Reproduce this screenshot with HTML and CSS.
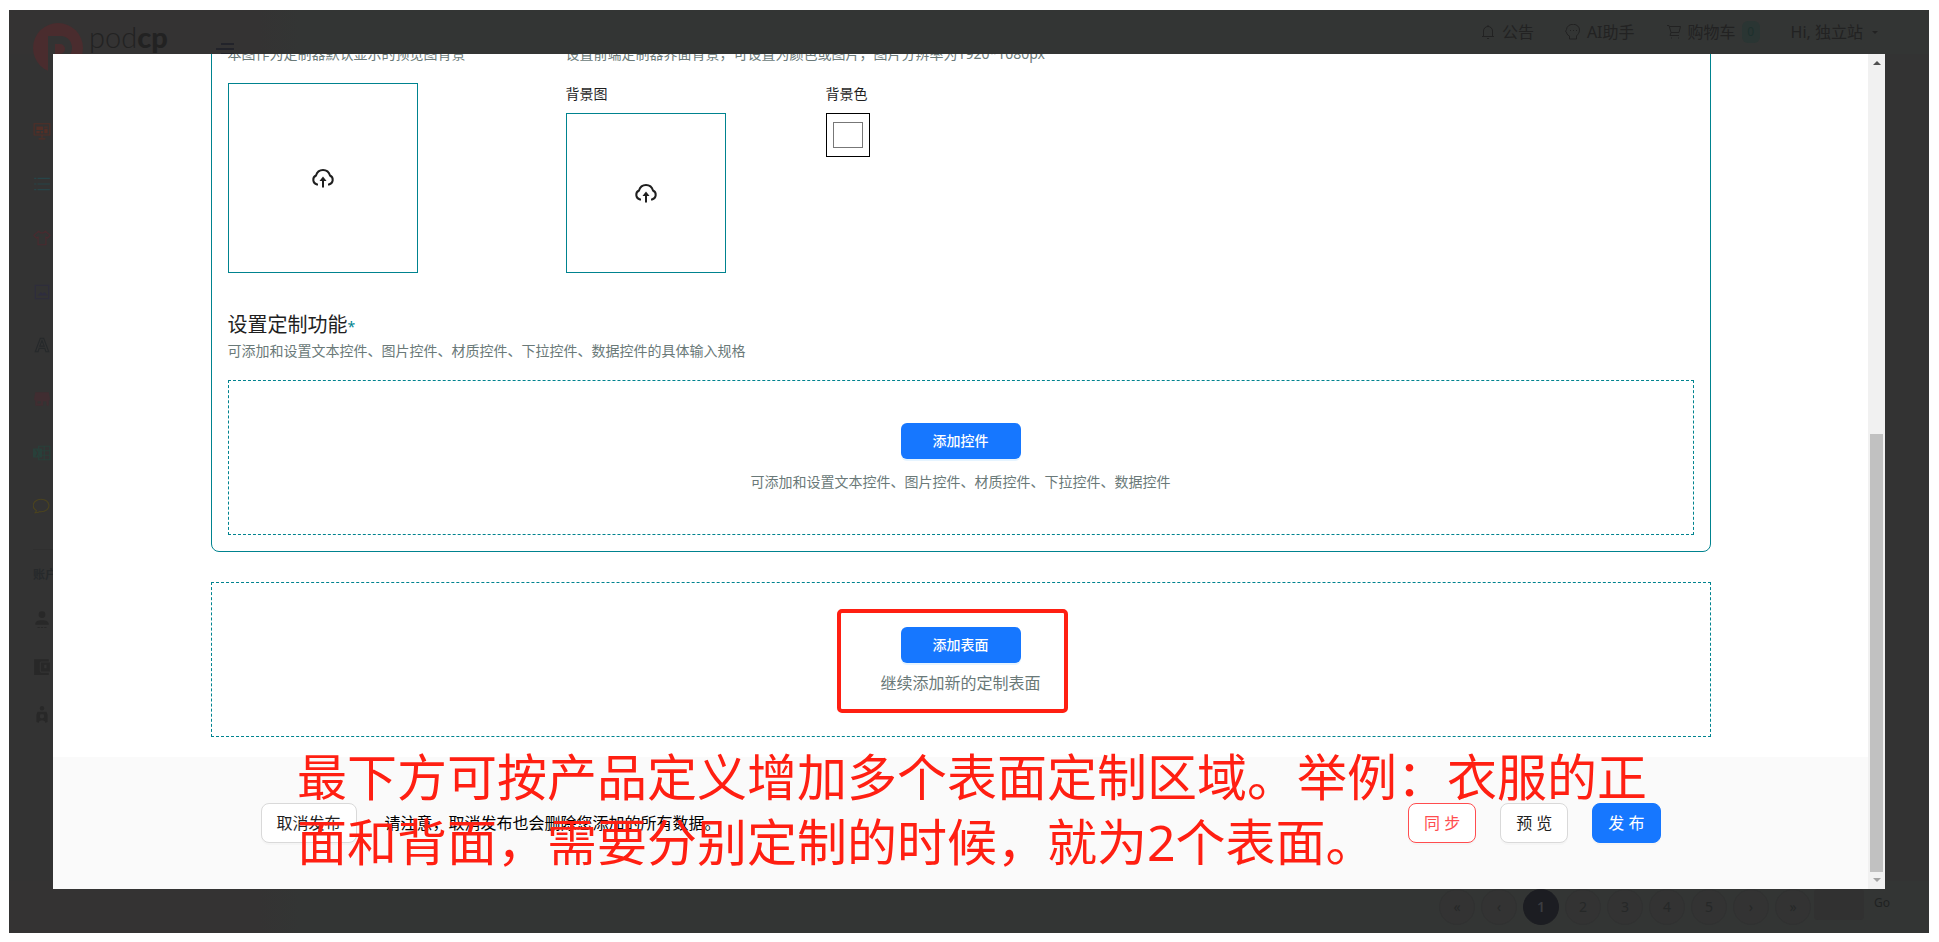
FILE: index.html
```
<!DOCTYPE html>
<html lang="zh-CN">
<head>
<meta charset="utf-8">
<title>podcp</title>
<link rel="stylesheet" href="styles.css">
</head>
<body>
<div class="app">
  <header class="topbar">
    <div class="brand">
      <svg class="brand-mark" viewBox="0 0 50 50" aria-hidden="true"><circle cx="25" cy="25" r="25" fill="#4a2c2e"/><path fill="#333" fill-rule="evenodd" d="M15 13h13a11 12 0 0 1 0 24h-5v13h-8zM22 21v10h5a5 5 0 0 0 0-10z"/></svg>
      <span class="brand-name">pod<b>cp</b></span>
      <svg class="menu" viewBox="0 0 18 12" aria-hidden="true"><path d="M5 1h13M0 6h18M5 11h13" stroke="#22232a" stroke-width="2"/></svg>
    </div>
    <nav class="top-links">
      <a href="#" class="top-link"><svg viewBox="0 0 16 16"><path d="M3.500 12V7a4.500 4.500 0 0 1 9 0v5M2 12.500h12M8 1v2M7 14.500h2" /></svg>公告</a>
      <a href="#" class="top-link"><svg viewBox="0 0 16 16"><path d="M4.500 15v-3C2 11 1.500 9 1.500 8l-1-.5 1-2A6.500 5.500 0 0 1 14.500 6c0 3-1.500 4-3 6v3zM5 6.500h1M8 6.500h1M11 6.500h1"/></svg>AI助手</a>
      <a href="#" class="top-link"><svg viewBox="0 0 16 16"><path d="M1 1.500h2l2 7h8l1.500-6H3.500M5 8.500l-1 3h9M5 14h1M12 14h1"/></svg>购物车<span class="count">0</span></a>
      <a href="#" class="top-link account">Hi, 独立站<i class="caret"></i></a>
    </nav>
  </header>

  <nav class="sidebar">
    <div class="side-main">
      <svg viewBox="0 0 16 16" style="color:#532f27"><path d="M1 1.500h14v10H1zM5 15h6M8 12v2"/><path class="solid" d="M3 4h6v3H3zM10 4h3v1h-3zM3 8h3v2H3zM7 8h2v2H7zM10 6h3v4h-3z"/></svg>
      <svg viewBox="0 0 16 16" style="color:#274549"><path d="M4 3h11M4 8h11M4 13h11M1 3h2M1 8h2M1 13h2"/></svg>
      <svg viewBox="0 0 16 16" style="color:#4a2a2f"><path d="M5 2 .8 5.500 3 8l1.500-.8V14h7V7.200L13 8l2.200-2.500L11 2Q8 5 5 2z"/></svg>
      <svg viewBox="0 0 16 16" style="color:#2e2d3e"><path d="M2 2h12v12H2z"/><path class="solid" d="M4 11l3-3 1.500 1.500L10 8l3 3z"/></svg>
      <svg viewBox="0 0 16 16" style="color:#26292b"><path d="M2 14 6.500 2h3L14 14h-2.500l-1-3h-5l-1 3zM6 9h4L8 4z"/></svg>
      <svg viewBox="0 0 16 16" style="color:#402d31"><path class="solid" fill-rule="evenodd" d="M2 2h12l1 5v2h-1v5h-2v-4H9v4H2V9H1V7zM4 10v2h3v-2z"/></svg>
      <svg viewBox="0 0 16 16" style="color:#28403a"><path d="M5 2h10v12H5zM10 2v12M5 6h10M5 10h10"/><path class="solid" fill-rule="evenodd" d="M0 4h8v8H0zM2 5l2 3-2 3h1l1-2 1 2h1L4.500 8 6 5H5L4 7 3 5z"/></svg>
      <svg viewBox="0 0 16 16" style="color:#4b431f"><path d="M2 14c1-1 1-2 1-2A7 5.500 0 1 1 6 13c-1 .8-2 1-4 1z"/></svg>
    </div>
    <p class="side-title">账户</p>
    <div class="side-account">
      <svg viewBox="0 0 16 16"><path class="solid" d="M8 1a3 3 0 0 1 0 6 3 3 0 0 1 0-6M2 13c0-3 2-4 6-4s6 1 6 4zM4 15h2v1H4zM7 15h2v1H7zM10 15h2v1h-2z"/></svg>
      <svg viewBox="0 0 16 16"><path class="solid" fill-rule="evenodd" d="M1 1h13v2H7L6 4v8l1 1h7v2H1zM7 4h8v8H7zM10 6v3h2V6z"/></svg>
      <svg viewBox="0 0 16 16"><path class="solid" fill-rule="evenodd" d="M8 0a2 2 0 0 1 0 4 2 2 0 0 1 0-4M4 5h8l1 3v6l-2 1c0-3-6-3-6 0l-2-1V8zM8 7a1.500 1.500 0 0 0 0 4 1.500 1.500 0 0 0 0-4"/></svg>
    </div>
  </nav>

  <footer class="pager">
    <div class="pages">
      <button type="button">«</button><button type="button">‹</button><button type="button" class="current">1</button><button type="button">2</button><button type="button">3</button><button type="button">4</button><button type="button">5</button><button type="button">›</button><button type="button">»</button>
    </div>
    <input class="page-input" type="text" aria-label="Go">
    <span class="go">Go</span>
  </footer>

  <section class="modal" role="dialog" aria-label="设置定制功能">
    <div class="modal-view">
      <div class="content">
        <div class="card">
          <div class="backgrounds">
            <div class="preview">
              <p class="hint">本图作为定制器默认显示的预览图背景</p>
              <button type="button" class="upload large" aria-label="上传预览图">
                <svg viewBox="0 0 24 20"><path d="M7 16.500H6A4.800 4.800 0 0 1 5 7.500C6 4 8.500 2 12 2s6 2 7 5.500a4.800 4.800 0 0 1-1 9h-1"/><path d="M12 19.500V10"/><path class="solid" d="M12 8.500 15.500 13h-7z"/></svg>
              </button>
            </div>
            <div class="editor">
              <p class="hint">设置前端定制器界面背景，可设置为颜色或图片，图片分辨率为1920*1080px</p>
              <div class="editor-fields">
                <div class="field">
                  <span class="label">背景图</span>
                  <button type="button" class="upload" aria-label="上传背景图">
                    <svg viewBox="0 0 24 20"><path d="M7 16.500H6A4.800 4.800 0 0 1 5 7.500C6 4 8.500 2 12 2s6 2 7 5.500a4.800 4.800 0 0 1-1 9h-1"/><path d="M12 19.500V10"/><path class="solid" d="M12 8.500 15.500 13h-7z"/></svg>
                  </button>
                </div>
                <div class="field">
                  <label class="label" for="bg-color">背景色</label>
                  <input class="color" id="bg-color" type="color" value="#ffffff">
                </div>
              </div>
            </div>
          </div>
          <h2 class="title">设置定制功能<span class="star">*</span></h2>
          <p class="hint">可添加和设置文本控件、图片控件、材质控件、下拉控件、数据控件的具体输入规格</p>
          <div class="dashed controls">
            <button type="button" class="add">添加控件</button>
            <p class="hint">可添加和设置文本控件、图片控件、材质控件、下拉控件、数据控件</p>
          </div>
        </div>
        <div class="dashed surface">
          <button type="button" class="add">添加表面</button>
          <p class="surface-hint">继续添加新的定制表面</p>
          <div class="highlight"></div>
        </div>
      </div>
      <div class="actions">
        <div class="actions-inner">
          <button type="button" class="btn">取消发布</button>
          <span class="warning">请注意，取消发布也会删除您添加的所有数据。</span>
          <div class="actions-right">
            <button type="button" class="btn danger">同 步</button>
            <button type="button" class="btn">预 览</button>
            <button type="button" class="btn primary">发 布</button>
          </div>
        </div>
      </div>
    </div>
    <div class="scrollbar" aria-hidden="true"><i class="arrow up"></i><i class="thumb"></i><i class="arrow down"></i></div>
  </section>

  <p class="annotation">最下方可按产品定义增加多个表面定制区域。举例：衣服的正<br>面和背面，需要分别定制的时候，就为2个表面。</p>
</div>
</body>
</html>
```
FILE: styles.css
```
* { box-sizing: border-box; }
body {
  margin: 0;
  padding: 10px 10px 9px 9px;
  background: #fff;
  color: #1f1f1f;
  font: 14px/22px "Noto Sans", "Noto Sans CJK SC", sans-serif;
}
p, h2 { margin: 0; }
button, input { font: inherit; color: inherit; }
svg { fill: none; stroke: currentColor; flex: none; }
svg .solid { fill: currentColor; stroke: none; }

.app {
  position: relative;
  display: grid;
  grid-template: 44px 1fr 52px / 44px 1fr;
  height: calc(100vh - 19px);
  background: #333;
}

.topbar {
  grid-column: 1 / 3;
  display: flex;
  justify-content: space-between;
  padding-right: 51px;
  background: linear-gradient(90deg, #343333 250px, #333534 290px);
  color: #222;
  z-index: 1;
}
.brand { display: flex; align-items: flex-start; padding: 13px 0 0 24px; }
.brand-mark { width: 50px; height: 50px; stroke: none; }
.brand-name {
  width: 132px;
  padding-left: 6px;
  font: 300 29px/28px Lato, sans-serif;
}
.brand-name b { font-weight: 900; }
.menu { width: 18px; height: 12px; margin: 20px 0 0 1px; }
.top-links { display: flex; gap: 31px; height: 44px; align-items: center; font-size: 16px; }
.top-link { display: flex; align-items: center; gap: 6px; color: inherit; text-decoration: none; }
.top-link svg { width: 16px; height: 16px; }
.count {
  width: 18px;
  border-radius: 6px;
  background: #2a3533;
  color: #1d302d;
  font-size: 12px;
  text-align: center;
}
.account { gap: 9px; }
.caret { border: 3px solid transparent; border-top-color: #222; border-bottom: 0; }

.sidebar { grid-row: 2; padding: 50px 0 0 24px; color: #282828; overflow: hidden; }
.sidebar svg { display: block; width: 18px; height: 18px; }
.side-main { display: flex; flex-direction: column; justify-content: space-around; height: 429px; }
.side-title {
  margin-top: 16px;
  padding-top: 14px;
  border-top: 1px solid #2f2f2f;
  font-size: 12px;
  font-weight: 700;
  white-space: nowrap;
  color: #26292b;
}
.side-account { display: flex; flex-direction: column; gap: 30px; padding-top: 24px; }

.pager {
  grid-row: 3;
  grid-column: 1 / 3;
  display: flex;
  justify-content: flex-end;
  gap: 3px;
  padding: 8px 39px 0 0;
  background: linear-gradient(90deg, #343333 250px, #333534 290px);
  color: #262828;
}
.pages { display: flex; gap: 6px; }
.pages button {
  width: 36px;
  height: 36px;
  padding: 0;
  border: 1px solid #303131;
  border-radius: 50%;
  background: #333;
}
.pages .current { background: #1c1d22; border-color: #1c1d22; color: #3b3c40; font-weight: 600; }
.page-input { width: 50px; height: 31px; border: 0; border-radius: 4px; background: #313131; }
.go { width: 16px; margin: 3px 0 0 7px; font-size: 12px; color: #1f2222; }

.modal {
  position: absolute;
  inset: 44px;
  z-index: 2;
  display: flex;
  background: #fff;
}
.modal-view { flex: 1; display: flex; flex-direction: column; justify-content: flex-end; overflow: hidden; }
.content { width: 1500px; max-width: 100%; margin: 0 auto; display: flex; flex-direction: column; gap: 30px; padding-bottom: 20px; }
.card { padding: 40px 16px 16px; border: 1px solid #00838f; border-radius: 8px; }
.hint { font-size: 14px; color: #6a7978; white-space: nowrap; }

.backgrounds { display: flex; }
.preview { width: 338px; }
.upload {
  display: grid;
  place-items: center;
  width: 160px;
  height: 160px;
  padding: 0;
  border: 1px solid #00838f;
  background: #fff;
}
.upload svg { width: 24px; height: 20px; stroke-width: 2; }
.upload.large { width: 190px; height: 190px; margin-top: 18px; }
.editor-fields { display: flex; gap: 100px; margin-top: 18px; }
.label { display: block; height: 30px; }
.color { display: block; width: 44px; height: 44px; padding: 0; border: 1px solid #000; background: #fff; }
.color::-webkit-color-swatch-wrapper { padding: 8px 6px; }
.color::-webkit-color-swatch { border: 1px solid #777; border-radius: 0; }

.title { margin-top: 37px; font-size: 20px; line-height: 30px; font-weight: 400; }
.star { font-size: 14px; line-height: 14px; color: #00838f; }
.dashed { display: flex; flex-direction: column; align-items: center; border: 1px dashed #00838f; }
.controls { gap: 12px; margin-top: 18px; padding: 42px 0 41px; }
.surface { position: relative; gap: 8px; padding: 44px 0 41px; }
.surface-hint { font-size: 16px; line-height: 24px; color: #6a7978; }
.add {
  width: 120px;
  height: 36px;
  border: 0;
  border-radius: 6px;
  background: #1677ff;
  color: #fff;
  font-weight: 500;
  box-shadow: 0 2px 0 #e6f4ff;
}
.highlight {
  position: absolute;
  top: 26px;
  left: calc(50% - 124px);
  width: 231px;
  height: 104px;
  border: 4px solid #ff1f12;
  border-radius: 5px;
}

.actions { padding: 46px 0; background: #fafafa; }
.actions-inner { display: flex; align-items: center; width: 1400px; max-width: 100%; margin: 0 auto; font-size: 16px; }
.actions-right { display: flex; gap: 24px; margin-left: auto; }
.btn {
  height: 40px;
  padding: 0 15px;
  border: 1px solid #d9d9d9;
  border-radius: 8px;
  background: #fff;
  box-shadow: 0 2px 0 #f5f5f5;
}
.warning { margin-left: 28px; color: #000; }
.btn.danger { border-color: #ff4d4f; color: #ff4d4f; }
.btn.primary { border-color: #1677ff; background: #1677ff; color: #fff; }

.scrollbar { display: flex; flex-direction: column; align-items: center; justify-content: space-between; width: 17px; padding: 7px 0; background: #f1f1f1; }
.thumb { width: 13px; height: 438px; margin: auto 0 6px; background: #c1c1c1; }
.arrow { border: 4px solid transparent; }
.up { border-top: 0; border-bottom-color: #505050; }
.down { border-bottom: 0; border-top-color: #a3a3a3; }

.annotation {
  position: absolute;
  top: 735px;
  left: 288px;
  z-index: 3;
  font-size: 50px;
  line-height: 65px;
  white-space: nowrap;
  color: #ff1f12;
}
```
